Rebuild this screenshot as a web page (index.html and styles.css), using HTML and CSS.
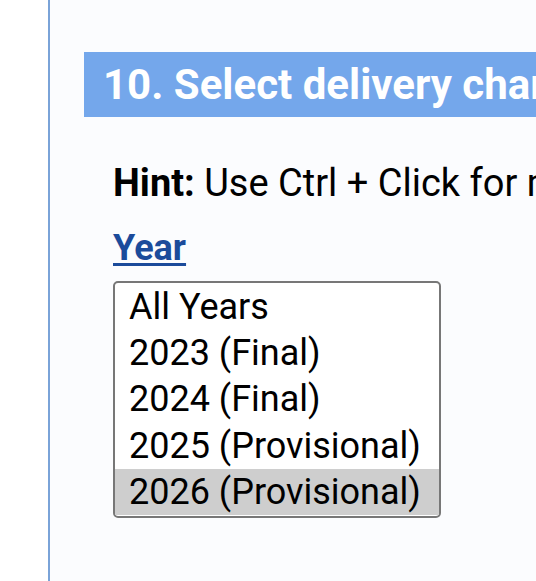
FILE: index.html
```html
<!DOCTYPE html>
<html lang="en">
<head>
<meta charset="utf-8">
<title>Select delivery charges</title>
<link rel="stylesheet" href="styles.css">
</head>
<body>
<div class="gutter"></div>
<main class="main">
  <h2 class="step-title">10. Select delivery charges</h2>
  <div class="step-body">
    <p class="hint"><strong>Hint:</strong> Use Ctrl + Click for multiple selections</p>
    <a class="field-label" href="#year">Year</a>
    <select id="year" class="listbox" multiple size="5">
      <option>All Years</option>
      <option>2023 (Final)</option>
      <option>2024 (Final)</option>
      <option>2025 (Provisional)</option>
      <option selected>2026 (Provisional)</option>
    </select>
  </div>
</main>
</body>
</html>
```

FILE: styles.css
```css
html, body {
  margin: 0;
  padding: 0;
  height: 100%;
}
body {
  display: flex;
  overflow: hidden;
  background: #ffffff;
  font-family: Roboto, "Noto Sans", sans-serif;
  color: #000;
}
.gutter {
  width: 48px;
  flex: none;
  background: #ffffff;
}
.main {
  flex: 1;
  min-width: 0;
  height: 100vh;
  box-sizing: border-box;
  border-left: 2px solid #7aa3d8;
  background: #fbfcfe;
  overflow: hidden;
  padding-top: 52px;
}
.step-title {
  margin: 0 0 0 34px;
  width: 760px;
  height: 65px;
  box-sizing: border-box;
  padding-left: 19px;
  background: #74a7eb;
  color: #ffffff;
  font-weight: 700;
  font-size: 42px;
  line-height: 65px;
  white-space: nowrap;
}
.step-body {
  padding-left: 63px;
  display: flex;
  flex-direction: column;
  align-items: flex-start;
}
.hint {
  margin: 44px 0 0;
  font-size: 38px;
  line-height: 44px;
  white-space: nowrap;
}
.hint strong {
  font-weight: 700;
}
.field-label {
  margin-top: 22px;
  font-size: 36px;
  line-height: 42px;
  font-weight: 700;
  color: #1b4b9b;
  text-decoration: underline;
  text-underline-offset: 3px;
  text-decoration-thickness: 3px;
}
.listbox {
  margin-top: 12px;
  width: 328px;
  height: 237px;
  box-sizing: border-box;
  border: 2px solid #777777;
  border-radius: 5px;
  padding: 1px 0;
  background: #ffffff;
  font-family: Roboto, "Noto Sans", sans-serif;
  font-size: 36px;
  overflow: hidden;
  outline: none;
}
.listbox option {
  padding: 2px 14px 1px;
  line-height: 42px;
  color: #000;
}
```
